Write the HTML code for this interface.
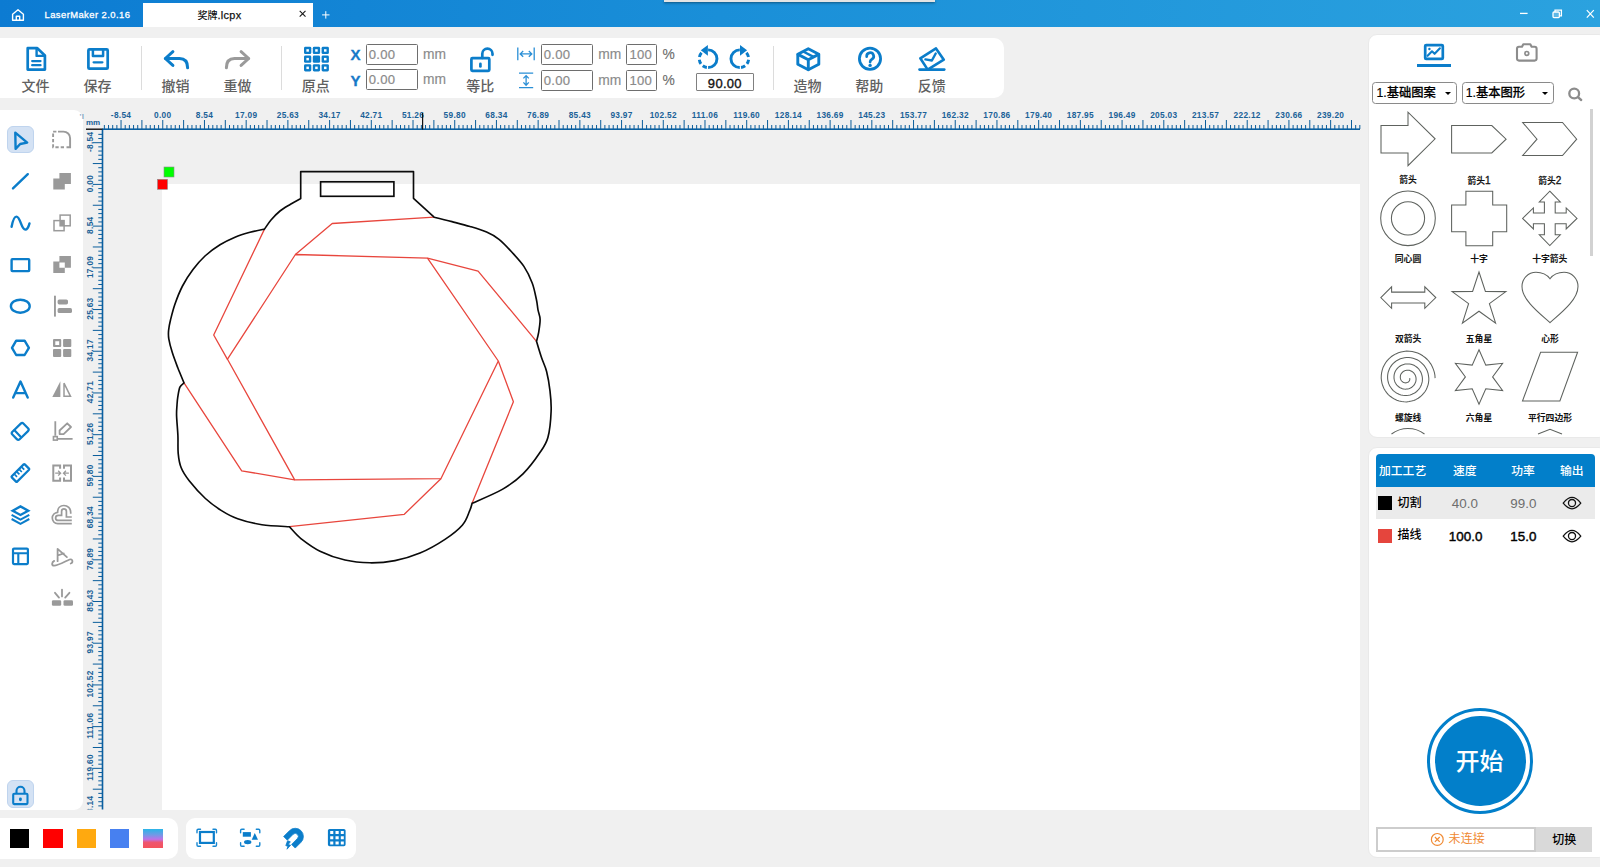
<!DOCTYPE html>
<html lang="zh-CN"><head><meta charset="utf-8"><title>LaserMaker 2.0.16</title>
<style>
*{box-sizing:border-box;margin:0;padding:0}
html,body{width:1600px;height:867px;overflow:hidden}
body{position:relative;background:#f0f0f0;font-family:"Liberation Sans","Noto Sans CJK SC",sans-serif;color:#000}
.abs{position:absolute}
.rl{font-family:"Liberation Sans",sans-serif;font-size:8.300px;font-weight:bold;fill:#1b6298;letter-spacing:.3px}
svg{display:block;overflow:visible}
.cj{font-family:"Liberation Sans","Noto Sans CJK SC",sans-serif}
</style></head><body>
<div class="abs" id="titlebar" style="left:0;top:0;width:1600px;height:27px;background:linear-gradient(90deg,#0c7bd2 0%,#1a8fd8 45%,#2ba2df 100%)"></div>
<div class="abs" style="left:664px;top:0;width:271px;height:1.5px;background:#e4e4e4;box-shadow:0 1px 2.5px rgba(0,0,0,.45)"></div>
<svg class="abs" style="left:11px;top:8px" width="14" height="14" viewBox="0 0 14 14"><path d="M1.6,6.2 L7,1.7 L12.4,6.2 V12.2 H1.6Z M5.3,12 V8.2 H8.7 V12" fill="none" stroke="#fff" stroke-width="1.4" stroke-linejoin="round"/></svg>
<div class="abs" style="left:44.500px;top:9.100px;font-size:9.400px;line-height:12px;color:#fff;letter-spacing:.45px;-webkit-text-stroke:.3px #fff;white-space:nowrap">LaserMaker 2.0.16</div>
<div class="abs" style="left:143.3px;top:3px;width:170.2px;height:24px;background:#fff"></div>
<div class="abs cj" style="left:143.500px;top:8.700px;width:152px;text-align:center;font-size:10px;line-height:13px;color:#111;font-weight:500;white-space:nowrap">奖牌<span style="font-size:10.900px;font-weight:400;letter-spacing:.3px;-webkit-text-stroke:.25px #111">.lcpx</span></div>
<svg class="abs" style="left:298px;top:9px" width="10" height="10" viewBox="298 9 10 10"><path d="M299.700,10.800 L305.500,16.600 M305.500,10.800 L299.700,16.600" stroke="#1a1a1a" stroke-width="1.100"/></svg>
<svg class="abs" style="left:321px;top:10px" width="10" height="10" viewBox="0 0 10 10"><path d="M4.8,1.2 V8.6 M1.1,4.9 H8.5" stroke="#fff" stroke-width="1"/></svg>
<svg class="abs" style="left:1518px;top:7px" width="80" height="14" viewBox="0 0 80 14"><g fill="none" stroke="#fff" stroke-width="1.3"><path d="M2,6.4 H9.6"/><rect x="35" y="5" width="6.4" height="5.6" rx="1" fill="#fff" fill-opacity=".25"/><path d="M37,5 V3.2 H43.4 V8.8 H41.4"/><path d="M68.8,3.2 L75.8,10.6 M75.8,3.2 L68.8,10.6" stroke-width="1.2"/></g></svg>
<style>
.tb{position:absolute;left:0;top:38.2px;width:1004.2px;height:59.5px;background:#fff;border-radius:0 10px 10px 0}
.tl{position:absolute;top:78px;width:60px;text-align:center;font-size:14px;line-height:16px;color:#606060;font-weight:500;white-space:nowrap}
.sep{position:absolute;top:46px;width:1px;height:44px;background:#dcdcdc}
.inp{position:absolute;border:1px solid #6e6e6e;border-radius:1.5px;background:#fff;height:20.6px;font-size:13.100px;line-height:18.600px;color:#8a8a8a;padding-left:1.700px;padding-top:1.300px;letter-spacing:.3px;-webkit-text-stroke:.2px #8a8a8a;white-space:nowrap;overflow:hidden}
.un{position:absolute;font-size:13.8px;line-height:16px;color:#8a8a8a;-webkit-text-stroke:.15px #8a8a8a}
.bl{fill:none;stroke:#0b7dca;stroke-linecap:round;stroke-linejoin:round}
</style>
<div class="tb"></div>
<!-- file -->
<svg class="abs" style="left:24px;top:44px" width="26" height="30" viewBox="0 0 26 30"><g class="bl" stroke-width="2.7"><path d="M3.7,4.200 H13.3 L20.900,11.4 V25.6 H3.700Z"/><path d="M12.6,4.6 V11.9 H20.3" stroke-width="2.4"/><path d="M8.200,17.100 H16.5 M8.200,21.200 H16.5" stroke-width="2.300"/></g></svg>
<div class="tl" style="left:5.5px">文件</div>
<!-- save -->
<svg class="abs" style="left:85px;top:46px" width="26" height="26" viewBox="0 0 26 26"><g class="bl" stroke-width="2.7"><rect x="3.4" y="3.4" width="19.3" height="19.3" rx="1"/><path d="M7.900,3.600 V10.100 H18.100 V3.600" stroke-width="2.500"/><path d="M8.600,16.300 H17.400" stroke-width="2.300"/></g></svg>
<div class="tl" style="left:67.5px">保存</div>
<div class="sep" style="left:141px"></div>
<!-- undo -->
<svg class="abs" style="left:160px;top:46px" width="32" height="26" viewBox="0 0 32 26"><g class="bl" stroke-width="3"><path d="M12.900,5.700 L5.300,12.500 L12.900,19.400"/><path d="M5.600,12.500 H19.500 Q27.600,12.500 27.600,21.800"/></g></svg>
<div class="tl" style="left:145.6px">撤销</div>
<!-- redo -->
<svg class="abs" style="left:222px;top:46px" width="32" height="26" viewBox="0 0 32 26"><g class="bl" stroke-width="3" style="stroke:#9a9a9a"><path d="M19.100,5.700 L26.700,12.500 L19.100,19.400"/><path d="M26.400,12.500 H12.500 Q4.400,12.500 4.400,21.800"/></g></svg>
<div class="tl" style="left:207.6px">重做</div>
<div class="sep" style="left:281px"></div>
<!-- origin -->
<svg class="abs" style="left:303px;top:46px" width="27" height="26" viewBox="0 0 27 26"><g fill="#0b7dca">
<rect x="1" y=".8" width="7.3" height="7.3" rx="1.400"/><rect x="9.8" y=".8" width="7.3" height="7.3" rx="1.400"/><rect x="18.6" y=".8" width="7.3" height="7.3" rx="1.400"/>
<rect x="1" y="9.5" width="7.3" height="7.3" rx="1.400"/><rect x="9.8" y="9.5" width="7.3" height="7.3" rx="1.400"/><rect x="18.6" y="9.5" width="7.3" height="7.3" rx="1.400"/>
<rect x="1" y="18.2" width="7.3" height="7.3" rx="1.400"/><rect x="9.8" y="18.2" width="7.3" height="7.3" rx="1.400"/><rect x="18.6" y="18.2" width="7.3" height="7.3" rx="1.400"/></g>
<g fill="#fff"><rect x="3.4" y="3.2" width="2.5" height="2.5"/><rect x="12.2" y="3.2" width="2.5" height="2.5"/><rect x="21" y="3.2" width="2.5" height="2.5"/>
<rect x="3.4" y="11.9" width="2.5" height="2.5"/><rect x="21" y="11.9" width="2.5" height="2.5"/>
<rect x="3.4" y="20.6" width="2.5" height="2.5"/><rect x="12.2" y="20.6" width="2.5" height="2.5"/><rect x="21" y="20.6" width="2.5" height="2.5"/></g></svg>
<div class="tl" style="left:285.8px">原点</div>
<!-- X / Y -->
<div class="abs" style="left:350.600px;top:46.400px;font-size:15px;line-height:17px;font-weight:bold;color:#1779c8;-webkit-text-stroke:.35px #1779c8">X</div>
<div class="abs" style="left:350.600px;top:72.100px;font-size:15px;line-height:17px;font-weight:bold;color:#1779c8;-webkit-text-stroke:.35px #1779c8">Y</div>
<div class="inp" style="left:366px;top:44.2px;width:51.6px">0.00</div>
<div class="inp" style="left:366px;top:69.2px;width:51.6px">0.00</div>
<div class="un" style="left:423px;top:47.300px">mm</div>
<div class="un" style="left:423px;top:72.300px">mm</div>
<!-- lock -->
<svg class="abs" style="left:467px;top:44px" width="30" height="30" viewBox="0 0 30 30"><g class="bl" stroke-width="2.7"><rect x="4.400" y="14.200" width="17.900" height="12.600" rx="1"/><path d="M15.300,14 V9.700 A5.100,5.100 0 0 1 25.500,9.700 V10.800" /><path d="M13.400,19.900 V22.500" stroke-width="2.700"/></g></svg>
<div class="tl" style="left:450.2px">等比</div>
<!-- W/H -->
<svg class="abs" style="left:515px;top:45px" width="22" height="18" viewBox="0 0 22 18"><g fill="none" stroke="#2a8fd6" stroke-width="1.3"><path d="M2.8,2.6 V15.2 M19.2,2.6 V15.2 M5.2,8.9 H16.8 M8.2,6 L5.2,8.9 L8.2,11.8 M13.8,6 L16.8,8.9 L13.8,11.8"/></g></svg>
<svg class="abs" style="left:517px;top:71px" width="18" height="19" viewBox="0 0 18 19"><g fill="none" stroke="#2a8fd6" stroke-width="1.3"><path d="M2,2.2 H16.2 M2,16.6 H16.2 M9.1,4.6 V14.2 M6.4,7.4 L9.1,4.6 L11.8,7.4 M6.4,11.4 L9.1,14.2 L11.8,11.4"/></g></svg>
<div class="inp" style="left:541px;top:44.2px;width:51.8px">0.00</div>
<div class="inp" style="left:541px;top:70.2px;width:51.8px">0.00</div>
<div class="un" style="left:598.2px;top:47.300px">mm</div>
<div class="un" style="left:598.2px;top:73.300px">mm</div>
<div class="inp" style="left:626.2px;top:44.2px;width:30.8px;padding-left:2.200px">100</div>
<div class="inp" style="left:626.2px;top:70.2px;width:30.8px;padding-left:2.200px">100</div>
<div class="un" style="left:662.6px;top:47.300px;color:#666">%</div>
<div class="un" style="left:662.6px;top:73.300px;color:#666">%</div>
<!-- rotate -->
<svg class="abs" style="left:0;top:0" width="1600" height="100" viewBox="0 0 1600 100"><g fill="none" stroke="#0b7dca" stroke-width="2.9"><path d="M708.10,49.85 A8.85,8.85 0 0 1 708.10,67.55"/><path d="M706.87,67.46 A8.85,8.85 0 0 1 702.77,65.77"/><path d="M700.94,63.90 A8.85,8.85 0 0 1 699.32,59.78"/><path d="M699.41,57.01 A8.85,8.85 0 0 1 701.52,52.78"/><path d="M707.90,44.9 V55.8 L700.80,50.2Z" fill="#0b7dca" stroke="none"/><path d="M739.80,49.85 A8.85,8.85 0 0 0 739.80,67.55"/><path d="M741.03,67.46 A8.85,8.85 0 0 0 745.13,65.77"/><path d="M746.96,63.90 A8.85,8.85 0 0 0 748.58,59.78"/><path d="M748.49,57.01 A8.85,8.85 0 0 0 746.38,52.78"/><path d="M740.00,44.9 V55.8 L747.10,50.2Z" fill="#0b7dca" stroke="none"/></g></svg>
<div class="inp" style="left:696.2px;top:73.4px;width:57.4px;height:17.4px;line-height:15.4px;padding:1.5px 0 0 0;text-align:center;color:#111;border-color:#808080;border-radius:1px;font-size:13px;-webkit-text-stroke:.35px #111">90.00</div>
<div class="sep" style="left:773px"></div>
<!-- box -->
<svg class="abs" style="left:794px;top:45px" width="28" height="28" viewBox="0 0 28 28"><g class="bl" stroke-width="2.900" stroke-linejoin="miter"><path d="M14.300,3.700 L24.800,9.200 V19.200 L14.300,24.700 L3.800,19.200 V9.200Z"/><path d="M4,9.400 L14.300,14.800 L24.600,9.400 M14.300,14.800 V24.400"/><path d="M9.200,6.500 L19.500,11.900" stroke-width="2.500" stroke-linecap="butt"/></g></svg>
<div class="tl" style="left:777.5px">造物</div>
<!-- help -->
<svg class="abs" style="left:856px;top:45px" width="28" height="28" viewBox="0 0 28 28"><g class="bl" stroke-width="2.800"><circle cx="14" cy="13.800" r="10.600"/><path d="M10.700,11.600 A3.500,3.500 0 1 1 15.900,14.300 Q14.100,15.300 14.100,17.100" stroke-width="2.700"/></g><circle cx="14.100" cy="20.400" r="1.700" fill="#0b7dca"/></svg>
<div class="tl" style="left:839.2px">帮助</div>
<!-- feedback -->
<svg class="abs" style="left:916px;top:44px" width="32" height="30" viewBox="0 0 32 30"><g class="bl" stroke-width="2.600"><path d="M3.500,25.600 H28.300"/><path d="M4.300,14.300 L20,4.400 L27.800,15.700 L11.700,25.600Z"/><path d="M9.400,15.400 L15.900,16.500 L19.700,9.500" stroke-width="2.400"/></g></svg>
<div class="tl" style="left:901.8px">反馈</div>
<div class="abs" style="left:0;top:110px;width:83px;height:699.500px;background:#fff;border-radius:0 9px 9px 0"></div>
<div class="abs" style="left:6.900px;top:126px;width:27.200px;height:27.200px;background:#d4e2f4;border:1px solid #bfd4ee;border-radius:6px"></div>
<svg class="abs" style="left:0;top:110px" width="84" height="700" viewBox="0 110 84 700">
<g fill="none" stroke="#0b7dca" stroke-width="2.4" stroke-linecap="round" stroke-linejoin="round">
<path d="M15.3,132.6 L27.2,142.6 L20.2,144 L15.6,148.8Z"/>
<path d="M13,188.4 L27.8,174.2"/>
<path d="M11.6,226.8 C12.6,221.5 13.8,216.6 16.4,216.6 C20.5,216.600 21.2,229.6 25.3,229.6 C27.6,229.6 28.7,226.5 29.5,223.400"/>
<rect x="11.6" y="259.1" width="17.6" height="12" rx=".8"/>
<ellipse cx="20.3" cy="306.2" rx="9.4" ry="6.5"/>
<path d="M12,347.8 L16.2,340.7 H24.6 L28.900,347.8 L24.6,355 H16.2Z"/>
<path d="M13.200,397.600 L20.500,381.600 L27.700,397.600 M15.800,393.100 H25.2"/>
<g transform="translate(20.200,431.400) rotate(-44)" stroke-width="2.200"><rect x="-7.800" y="-5.200" width="15.600" height="10.400" rx="2"/><path d="M-3.300,-4.800 V4.800"/></g>
<g transform="translate(20.400,473) rotate(-45)"><rect x="-9.200" y="-3.800" width="18.400" height="7.600" rx=".8" stroke-width="2.200"/><path d="M-5.100,-3.300 V0.300 M-1.700,-3.300 V0.300 M1.700,-3.300 V0.300 M5.100,-3.300 V0.300" stroke-width="1.700" stroke-linecap="butt"/></g>
<path d="M12.700,510.700 L20.460,506.400 L28.200,510.700 L20.460,515Z" stroke-width="2.400" stroke-linejoin="miter"/>
<path d="M11.600,514.900 L20.460,519.700 L29.300,514.900 M11.600,519 L20.460,523.800 L29.300,519" stroke-width="2" stroke-linejoin="miter" stroke-linecap="butt"/>
<rect x="13" y="548.600" width="14.900" height="15.500" rx="1" stroke-width="2.200"/><path d="M13,553.300 H28 M18.300,553.500 V564" stroke-linecap="butt" stroke-width="2.100"/>
</g>
<g fill="none" stroke="#9a9a9a" stroke-width="1.400">
<path d="M58,131.600 H63.500 A6.600,6.600 0 0 1 70.100,138.200 V147.200 H66.500" stroke-width="1.900"/>
<path d="M56.400,131.600 H53.100 V147.200 H65.500" stroke-dasharray="3.300 2" stroke-width="1.900"/>
<rect x="54" y="220.600" width="10.100" height="10.100" stroke-width="1.500"/><rect x="60.100" y="215.100" width="10.100" height="10.700" stroke-width="1.500"/>
<path d="M64,383.200 V396.300 H70.500Z" stroke-linejoin="miter" stroke-width="1.500"/>
<path d="M55.300,421.300 V435.800 M58,438.800 H72.600" stroke-width="1.800"/><rect x="53.450" y="436.600" width="3.800" height="3.500" stroke-width="1.600"/>
<path d="M67.200,423.300 L71,427 L63.600,434.100 H59.600 V430.500Z" stroke-linejoin="round" stroke-width="1.800"/>
<path d="M60.100,468.800 V465.600 H53.300 V480.800 H60.100 V477.600 M64,468.800 V465.600 H71 V480.800 H64 V477.600" stroke-width="2"/>
<path d="M55.200,473.200 H60.400 M58.200,470.800 L60.600,473.200 L58.200,475.600 M68.900,473.200 H63.700 M65.900,470.800 L63.500,473.200 L65.900,475.600" stroke-width="1.300"/>
<path d="M71.800,523.700 H57.800 C54.500,523.700 52.300,521 52.300,518 C52.300,514.800 54.800,512.600 57.600,512.300 C57.600,508.400 60.200,505.500 63.900,505.500 C67.700,505.500 70.700,508.400 70.700,512.300 V513.800" stroke-width="1.700"/>
<path d="M71.800,520.400 H58.400 C56.700,520.400 55.600,519.300 55.600,517.900 C55.600,516.500 56.800,515.400 58.400,515.400 H61.600 V511.400 C61.600,509.900 62.600,508.800 63.900,508.800 C65.400,508.800 66.400,509.900 66.400,511.400 V517 H71.800" stroke-width="1.700"/>
<path d="M57.600,561.200 V548.800 L66.900,557.100 M57.800,555.300 L63.800,553.500" stroke-width="1.800" stroke-linecap="round" stroke-linejoin="round"/>
<path d="M54.200,560.900 C51.600,562.200 51.400,565.500 54,565.700 C57.500,565.900 66,561 69.600,559.500 C72.600,558.300 73.500,562.600 70.700,563.500" stroke-width="1.800" stroke-linecap="round"/>
<path d="M62,589.600 V596.400 M55,592.800 L59,597.600 M69.400,592.800 L65.200,597.600" stroke-width="1.800" stroke-linecap="round"/>
</g>
<g fill="#9a9a9a">
<path d="M59.400,172.900 H70.900 V184.100 H64.800 V189.600 H53.300 V178.400 H59.400Z"/>
<rect x="60.100" y="220.600" width="4" height="5.200"/>
<path d="M59.400,256.100 H70.900 V267.800 H64.800 V273.100 H53.300 V261.600 H59.400Z M59.400,262.400 V267.800 H64.800 V262.400Z" fill-rule="evenodd"/>
<rect x="54" y="295.700" width="1.900" height="20.900"/><rect x="57.600" y="299.500" width="10.400" height="4.900" rx="1.600"/><rect x="57.600" y="308.100" width="14.400" height="4.900" rx="1.600"/>
<path d="M54,339 H60.200 Q61.200,339 61.200,340 V346.100 Q61.200,347.100 60.200,347.100 H54 Q53,347.100 53,346.100 V340 Q53,339 54,339Z M55.300,341.300 V344.900 H59.200 V341.300Z" fill-rule="evenodd"/>
<rect x="63.100" y="339" width="8.200" height="8.100" rx="1"/><rect x="53" y="349" width="8.200" height="8.100" rx="1"/><rect x="63.100" y="349" width="8.200" height="8.100" rx="1"/>
<path d="M60.400,381.300 V397.100 H52.300Z"/>
<rect x="51.900" y="600.200" width="9.300" height="5.500" rx="1.300"/><rect x="63.500" y="600.200" width="9.500" height="5.500" rx="1.300"/>
</g>
</svg>
<div class="abs" style="left:6.800px;top:779.900px;width:27.200px;height:28px;background:#d4e2f4;border:1px solid #bfd4ee;border-radius:6px"></div>
<svg class="abs" style="left:7px;top:780.500px" width="27" height="28" viewBox="0 0 27 28"><g fill="none" stroke="#0b7dca" stroke-width="2.100"><rect x="6.200" y="12.800" width="14.300" height="10.300" rx="1"/><path d="M9.500,12.600 V9.700 A4,4 0 0 1 17.500,9.700 V12.600"/><path d="M13.400,17.800 V18.800" stroke-width="2.800" stroke-linecap="round"/></g></svg>
<div class="abs" style="left:162px;top:184px;width:1198px;height:625.5px;background:#fff"></div><svg class="abs" style="left:0;top:0" width="1600" height="867" viewBox="0 0 1600 867">
<defs><clipPath id="vclip"><rect x="84" y="130" width="20" height="679.5"/></clipPath></defs>
<g fill="#0b5e9c"><rect x="103.86" y="125" width="1" height="4"/><rect x="108.03" y="125" width="1" height="4"/><rect x="112.20" y="125" width="1" height="4"/><rect x="116.37" y="125" width="1" height="4"/><rect x="120.54" y="120" width="1" height="9"/><rect x="124.71" y="125" width="1" height="4"/><rect x="128.88" y="125" width="1" height="4"/><rect x="133.05" y="125" width="1" height="4"/><rect x="137.22" y="125" width="1" height="4"/><rect x="141.40" y="120" width="1" height="9"/><rect x="145.57" y="125" width="1" height="4"/><rect x="149.74" y="125" width="1" height="4"/><rect x="153.91" y="125" width="1" height="4"/><rect x="158.08" y="125" width="1" height="4"/><rect x="162.25" y="120" width="1" height="9"/><rect x="166.42" y="125" width="1" height="4"/><rect x="170.59" y="125" width="1" height="4"/><rect x="174.76" y="125" width="1" height="4"/><rect x="178.93" y="125" width="1" height="4"/><rect x="183.10" y="120" width="1" height="9"/><rect x="187.28" y="125" width="1" height="4"/><rect x="191.45" y="125" width="1" height="4"/><rect x="195.62" y="125" width="1" height="4"/><rect x="199.79" y="125" width="1" height="4"/><rect x="203.96" y="120" width="1" height="9"/><rect x="208.13" y="125" width="1" height="4"/><rect x="212.30" y="125" width="1" height="4"/><rect x="216.47" y="125" width="1" height="4"/><rect x="220.64" y="125" width="1" height="4"/><rect x="224.81" y="120" width="1" height="9"/><rect x="228.99" y="125" width="1" height="4"/><rect x="233.16" y="125" width="1" height="4"/><rect x="237.33" y="125" width="1" height="4"/><rect x="241.50" y="125" width="1" height="4"/><rect x="245.67" y="120" width="1" height="9"/><rect x="249.84" y="125" width="1" height="4"/><rect x="254.01" y="125" width="1" height="4"/><rect x="258.18" y="125" width="1" height="4"/><rect x="262.35" y="125" width="1" height="4"/><rect x="266.52" y="120" width="1" height="9"/><rect x="270.70" y="125" width="1" height="4"/><rect x="274.87" y="125" width="1" height="4"/><rect x="279.04" y="125" width="1" height="4"/><rect x="283.21" y="125" width="1" height="4"/><rect x="287.38" y="120" width="1" height="9"/><rect x="291.55" y="125" width="1" height="4"/><rect x="295.72" y="125" width="1" height="4"/><rect x="299.89" y="125" width="1" height="4"/><rect x="304.06" y="125" width="1" height="4"/><rect x="308.24" y="120" width="1" height="9"/><rect x="312.41" y="125" width="1" height="4"/><rect x="316.58" y="125" width="1" height="4"/><rect x="320.75" y="125" width="1" height="4"/><rect x="324.92" y="125" width="1" height="4"/><rect x="329.09" y="120" width="1" height="9"/><rect x="333.26" y="125" width="1" height="4"/><rect x="337.43" y="125" width="1" height="4"/><rect x="341.60" y="125" width="1" height="4"/><rect x="345.77" y="125" width="1" height="4"/><rect x="349.95" y="120" width="1" height="9"/><rect x="354.12" y="125" width="1" height="4"/><rect x="358.29" y="125" width="1" height="4"/><rect x="362.46" y="125" width="1" height="4"/><rect x="366.63" y="125" width="1" height="4"/><rect x="370.80" y="120" width="1" height="9"/><rect x="374.97" y="125" width="1" height="4"/><rect x="379.14" y="125" width="1" height="4"/><rect x="383.31" y="125" width="1" height="4"/><rect x="387.48" y="125" width="1" height="4"/><rect x="391.65" y="120" width="1" height="9"/><rect x="395.83" y="125" width="1" height="4"/><rect x="400.00" y="125" width="1" height="4"/><rect x="404.17" y="125" width="1" height="4"/><rect x="408.34" y="125" width="1" height="4"/><rect x="412.51" y="120" width="1" height="9"/><rect x="416.68" y="125" width="1" height="4"/><rect x="420.85" y="125" width="1" height="4"/><rect x="425.02" y="125" width="1" height="4"/><rect x="429.19" y="125" width="1" height="4"/><rect x="433.37" y="120" width="1" height="9"/><rect x="437.54" y="125" width="1" height="4"/><rect x="441.71" y="125" width="1" height="4"/><rect x="445.88" y="125" width="1" height="4"/><rect x="450.05" y="125" width="1" height="4"/><rect x="454.22" y="120" width="1" height="9"/><rect x="458.39" y="125" width="1" height="4"/><rect x="462.56" y="125" width="1" height="4"/><rect x="466.73" y="125" width="1" height="4"/><rect x="470.90" y="125" width="1" height="4"/><rect x="475.08" y="120" width="1" height="9"/><rect x="479.25" y="125" width="1" height="4"/><rect x="483.42" y="125" width="1" height="4"/><rect x="487.59" y="125" width="1" height="4"/><rect x="491.76" y="125" width="1" height="4"/><rect x="495.93" y="120" width="1" height="9"/><rect x="500.10" y="125" width="1" height="4"/><rect x="504.27" y="125" width="1" height="4"/><rect x="508.44" y="125" width="1" height="4"/><rect x="512.61" y="125" width="1" height="4"/><rect x="516.79" y="120" width="1" height="9"/><rect x="520.96" y="125" width="1" height="4"/><rect x="525.13" y="125" width="1" height="4"/><rect x="529.30" y="125" width="1" height="4"/><rect x="533.47" y="125" width="1" height="4"/><rect x="537.64" y="120" width="1" height="9"/><rect x="541.81" y="125" width="1" height="4"/><rect x="545.98" y="125" width="1" height="4"/><rect x="550.15" y="125" width="1" height="4"/><rect x="554.32" y="125" width="1" height="4"/><rect x="558.50" y="120" width="1" height="9"/><rect x="562.67" y="125" width="1" height="4"/><rect x="566.84" y="125" width="1" height="4"/><rect x="571.01" y="125" width="1" height="4"/><rect x="575.18" y="125" width="1" height="4"/><rect x="579.35" y="120" width="1" height="9"/><rect x="583.52" y="125" width="1" height="4"/><rect x="587.69" y="125" width="1" height="4"/><rect x="591.86" y="125" width="1" height="4"/><rect x="596.03" y="125" width="1" height="4"/><rect x="600.21" y="120" width="1" height="9"/><rect x="604.38" y="125" width="1" height="4"/><rect x="608.55" y="125" width="1" height="4"/><rect x="612.72" y="125" width="1" height="4"/><rect x="616.89" y="125" width="1" height="4"/><rect x="621.06" y="120" width="1" height="9"/><rect x="625.23" y="125" width="1" height="4"/><rect x="629.40" y="125" width="1" height="4"/><rect x="633.57" y="125" width="1" height="4"/><rect x="637.74" y="125" width="1" height="4"/><rect x="641.91" y="120" width="1" height="9"/><rect x="646.09" y="125" width="1" height="4"/><rect x="650.26" y="125" width="1" height="4"/><rect x="654.43" y="125" width="1" height="4"/><rect x="658.60" y="125" width="1" height="4"/><rect x="662.77" y="120" width="1" height="9"/><rect x="666.94" y="125" width="1" height="4"/><rect x="671.11" y="125" width="1" height="4"/><rect x="675.28" y="125" width="1" height="4"/><rect x="679.45" y="125" width="1" height="4"/><rect x="683.62" y="120" width="1" height="9"/><rect x="687.80" y="125" width="1" height="4"/><rect x="691.97" y="125" width="1" height="4"/><rect x="696.14" y="125" width="1" height="4"/><rect x="700.31" y="125" width="1" height="4"/><rect x="704.48" y="120" width="1" height="9"/><rect x="708.65" y="125" width="1" height="4"/><rect x="712.82" y="125" width="1" height="4"/><rect x="716.99" y="125" width="1" height="4"/><rect x="721.16" y="125" width="1" height="4"/><rect x="725.34" y="120" width="1" height="9"/><rect x="729.51" y="125" width="1" height="4"/><rect x="733.68" y="125" width="1" height="4"/><rect x="737.85" y="125" width="1" height="4"/><rect x="742.02" y="125" width="1" height="4"/><rect x="746.19" y="120" width="1" height="9"/><rect x="750.36" y="125" width="1" height="4"/><rect x="754.53" y="125" width="1" height="4"/><rect x="758.70" y="125" width="1" height="4"/><rect x="762.87" y="125" width="1" height="4"/><rect x="767.05" y="120" width="1" height="9"/><rect x="771.22" y="125" width="1" height="4"/><rect x="775.39" y="125" width="1" height="4"/><rect x="779.56" y="125" width="1" height="4"/><rect x="783.73" y="125" width="1" height="4"/><rect x="787.90" y="120" width="1" height="9"/><rect x="792.07" y="125" width="1" height="4"/><rect x="796.24" y="125" width="1" height="4"/><rect x="800.41" y="125" width="1" height="4"/><rect x="804.58" y="125" width="1" height="4"/><rect x="808.75" y="120" width="1" height="9"/><rect x="812.93" y="125" width="1" height="4"/><rect x="817.10" y="125" width="1" height="4"/><rect x="821.27" y="125" width="1" height="4"/><rect x="825.44" y="125" width="1" height="4"/><rect x="829.61" y="120" width="1" height="9"/><rect x="833.78" y="125" width="1" height="4"/><rect x="837.95" y="125" width="1" height="4"/><rect x="842.12" y="125" width="1" height="4"/><rect x="846.29" y="125" width="1" height="4"/><rect x="850.47" y="120" width="1" height="9"/><rect x="854.64" y="125" width="1" height="4"/><rect x="858.81" y="125" width="1" height="4"/><rect x="862.98" y="125" width="1" height="4"/><rect x="867.15" y="125" width="1" height="4"/><rect x="871.32" y="120" width="1" height="9"/><rect x="875.49" y="125" width="1" height="4"/><rect x="879.66" y="125" width="1" height="4"/><rect x="883.83" y="125" width="1" height="4"/><rect x="888.00" y="125" width="1" height="4"/><rect x="892.18" y="120" width="1" height="9"/><rect x="896.35" y="125" width="1" height="4"/><rect x="900.52" y="125" width="1" height="4"/><rect x="904.69" y="125" width="1" height="4"/><rect x="908.86" y="125" width="1" height="4"/><rect x="913.03" y="120" width="1" height="9"/><rect x="917.20" y="125" width="1" height="4"/><rect x="921.37" y="125" width="1" height="4"/><rect x="925.54" y="125" width="1" height="4"/><rect x="929.71" y="125" width="1" height="4"/><rect x="933.89" y="120" width="1" height="9"/><rect x="938.06" y="125" width="1" height="4"/><rect x="942.23" y="125" width="1" height="4"/><rect x="946.40" y="125" width="1" height="4"/><rect x="950.57" y="125" width="1" height="4"/><rect x="954.74" y="120" width="1" height="9"/><rect x="958.91" y="125" width="1" height="4"/><rect x="963.08" y="125" width="1" height="4"/><rect x="967.25" y="125" width="1" height="4"/><rect x="971.42" y="125" width="1" height="4"/><rect x="975.60" y="120" width="1" height="9"/><rect x="979.77" y="125" width="1" height="4"/><rect x="983.94" y="125" width="1" height="4"/><rect x="988.11" y="125" width="1" height="4"/><rect x="992.28" y="125" width="1" height="4"/><rect x="996.45" y="120" width="1" height="9"/><rect x="1000.62" y="125" width="1" height="4"/><rect x="1004.79" y="125" width="1" height="4"/><rect x="1008.96" y="125" width="1" height="4"/><rect x="1013.13" y="125" width="1" height="4"/><rect x="1017.31" y="120" width="1" height="9"/><rect x="1021.48" y="125" width="1" height="4"/><rect x="1025.65" y="125" width="1" height="4"/><rect x="1029.82" y="125" width="1" height="4"/><rect x="1033.99" y="125" width="1" height="4"/><rect x="1038.16" y="120" width="1" height="9"/><rect x="1042.33" y="125" width="1" height="4"/><rect x="1046.50" y="125" width="1" height="4"/><rect x="1050.67" y="125" width="1" height="4"/><rect x="1054.84" y="125" width="1" height="4"/><rect x="1059.02" y="120" width="1" height="9"/><rect x="1063.19" y="125" width="1" height="4"/><rect x="1067.36" y="125" width="1" height="4"/><rect x="1071.53" y="125" width="1" height="4"/><rect x="1075.70" y="125" width="1" height="4"/><rect x="1079.87" y="120" width="1" height="9"/><rect x="1084.04" y="125" width="1" height="4"/><rect x="1088.21" y="125" width="1" height="4"/><rect x="1092.38" y="125" width="1" height="4"/><rect x="1096.55" y="125" width="1" height="4"/><rect x="1100.72" y="120" width="1" height="9"/><rect x="1104.90" y="125" width="1" height="4"/><rect x="1109.07" y="125" width="1" height="4"/><rect x="1113.24" y="125" width="1" height="4"/><rect x="1117.41" y="125" width="1" height="4"/><rect x="1121.58" y="120" width="1" height="9"/><rect x="1125.75" y="125" width="1" height="4"/><rect x="1129.92" y="125" width="1" height="4"/><rect x="1134.09" y="125" width="1" height="4"/><rect x="1138.26" y="125" width="1" height="4"/><rect x="1142.43" y="120" width="1" height="9"/><rect x="1146.61" y="125" width="1" height="4"/><rect x="1150.78" y="125" width="1" height="4"/><rect x="1154.95" y="125" width="1" height="4"/><rect x="1159.12" y="125" width="1" height="4"/><rect x="1163.29" y="120" width="1" height="9"/><rect x="1167.46" y="125" width="1" height="4"/><rect x="1171.63" y="125" width="1" height="4"/><rect x="1175.80" y="125" width="1" height="4"/><rect x="1179.97" y="125" width="1" height="4"/><rect x="1184.14" y="120" width="1" height="9"/><rect x="1188.32" y="125" width="1" height="4"/><rect x="1192.49" y="125" width="1" height="4"/><rect x="1196.66" y="125" width="1" height="4"/><rect x="1200.83" y="125" width="1" height="4"/><rect x="1205.00" y="120" width="1" height="9"/><rect x="1209.17" y="125" width="1" height="4"/><rect x="1213.34" y="125" width="1" height="4"/><rect x="1217.51" y="125" width="1" height="4"/><rect x="1221.68" y="125" width="1" height="4"/><rect x="1225.86" y="120" width="1" height="9"/><rect x="1230.03" y="125" width="1" height="4"/><rect x="1234.20" y="125" width="1" height="4"/><rect x="1238.37" y="125" width="1" height="4"/><rect x="1242.54" y="125" width="1" height="4"/><rect x="1246.71" y="120" width="1" height="9"/><rect x="1250.88" y="125" width="1" height="4"/><rect x="1255.05" y="125" width="1" height="4"/><rect x="1259.22" y="125" width="1" height="4"/><rect x="1263.39" y="125" width="1" height="4"/><rect x="1267.57" y="120" width="1" height="9"/><rect x="1271.74" y="125" width="1" height="4"/><rect x="1275.91" y="125" width="1" height="4"/><rect x="1280.08" y="125" width="1" height="4"/><rect x="1284.25" y="125" width="1" height="4"/><rect x="1288.42" y="120" width="1" height="9"/><rect x="1292.59" y="125" width="1" height="4"/><rect x="1296.76" y="125" width="1" height="4"/><rect x="1300.93" y="125" width="1" height="4"/><rect x="1305.10" y="125" width="1" height="4"/><rect x="1309.28" y="120" width="1" height="9"/><rect x="1313.45" y="125" width="1" height="4"/><rect x="1317.62" y="125" width="1" height="4"/><rect x="1321.79" y="125" width="1" height="4"/><rect x="1325.96" y="125" width="1" height="4"/><rect x="1330.13" y="120" width="1" height="9"/><rect x="1334.30" y="125" width="1" height="4"/><rect x="1338.47" y="125" width="1" height="4"/><rect x="1342.64" y="125" width="1" height="4"/><rect x="1346.81" y="125" width="1" height="4"/><rect x="1350.99" y="120" width="1" height="9"/><rect x="1355.16" y="125" width="1" height="4"/><rect x="1359.33" y="125" width="1" height="4"/></g>
<rect x="102" y="128.4" width="1258" height="1.6" fill="#0a5fa0"/>
<g clip-path="url(#vclip)"><g fill="#0b5e9c"><rect x="98.3" y="133.85" width="3.7" height="1"/><rect x="98.3" y="138.02" width="3.7" height="1"/><rect x="92.8" y="142.19" width="9.2" height="1"/><rect x="98.3" y="146.36" width="3.7" height="1"/><rect x="98.3" y="150.53" width="3.7" height="1"/><rect x="98.3" y="154.70" width="3.7" height="1"/><rect x="98.3" y="158.87" width="3.7" height="1"/><rect x="92.8" y="163.05" width="9.2" height="1"/><rect x="98.3" y="167.22" width="3.7" height="1"/><rect x="98.3" y="171.39" width="3.7" height="1"/><rect x="98.3" y="175.56" width="3.7" height="1"/><rect x="98.3" y="179.73" width="3.7" height="1"/><rect x="92.8" y="183.90" width="9.2" height="1"/><rect x="98.3" y="188.07" width="3.7" height="1"/><rect x="98.3" y="192.24" width="3.7" height="1"/><rect x="98.3" y="196.41" width="3.7" height="1"/><rect x="98.3" y="200.58" width="3.7" height="1"/><rect x="92.8" y="204.75" width="9.2" height="1"/><rect x="98.3" y="208.93" width="3.7" height="1"/><rect x="98.3" y="213.10" width="3.7" height="1"/><rect x="98.3" y="217.27" width="3.7" height="1"/><rect x="98.3" y="221.44" width="3.7" height="1"/><rect x="92.8" y="225.61" width="9.2" height="1"/><rect x="98.3" y="229.78" width="3.7" height="1"/><rect x="98.3" y="233.95" width="3.7" height="1"/><rect x="98.3" y="238.12" width="3.7" height="1"/><rect x="98.3" y="242.29" width="3.7" height="1"/><rect x="92.8" y="246.47" width="9.2" height="1"/><rect x="98.3" y="250.64" width="3.7" height="1"/><rect x="98.3" y="254.81" width="3.7" height="1"/><rect x="98.3" y="258.98" width="3.7" height="1"/><rect x="98.3" y="263.15" width="3.7" height="1"/><rect x="92.8" y="267.32" width="9.2" height="1"/><rect x="98.3" y="271.49" width="3.7" height="1"/><rect x="98.3" y="275.66" width="3.7" height="1"/><rect x="98.3" y="279.83" width="3.7" height="1"/><rect x="98.3" y="284.00" width="3.7" height="1"/><rect x="92.8" y="288.18" width="9.2" height="1"/><rect x="98.3" y="292.35" width="3.7" height="1"/><rect x="98.3" y="296.52" width="3.7" height="1"/><rect x="98.3" y="300.69" width="3.7" height="1"/><rect x="98.3" y="304.86" width="3.7" height="1"/><rect x="92.8" y="309.03" width="9.2" height="1"/><rect x="98.3" y="313.20" width="3.7" height="1"/><rect x="98.3" y="317.37" width="3.7" height="1"/><rect x="98.3" y="321.54" width="3.7" height="1"/><rect x="98.3" y="325.71" width="3.7" height="1"/><rect x="92.8" y="329.88" width="9.2" height="1"/><rect x="98.3" y="334.06" width="3.7" height="1"/><rect x="98.3" y="338.23" width="3.7" height="1"/><rect x="98.3" y="342.40" width="3.7" height="1"/><rect x="98.3" y="346.57" width="3.7" height="1"/><rect x="92.8" y="350.74" width="9.2" height="1"/><rect x="98.3" y="354.91" width="3.7" height="1"/><rect x="98.3" y="359.08" width="3.7" height="1"/><rect x="98.3" y="363.25" width="3.7" height="1"/><rect x="98.3" y="367.42" width="3.7" height="1"/><rect x="92.8" y="371.60" width="9.2" height="1"/><rect x="98.3" y="375.77" width="3.7" height="1"/><rect x="98.3" y="379.94" width="3.7" height="1"/><rect x="98.3" y="384.11" width="3.7" height="1"/><rect x="98.3" y="388.28" width="3.7" height="1"/><rect x="92.8" y="392.45" width="9.2" height="1"/><rect x="98.3" y="396.62" width="3.7" height="1"/><rect x="98.3" y="400.79" width="3.7" height="1"/><rect x="98.3" y="404.96" width="3.7" height="1"/><rect x="98.3" y="409.13" width="3.7" height="1"/><rect x="92.8" y="413.31" width="9.2" height="1"/><rect x="98.3" y="417.48" width="3.7" height="1"/><rect x="98.3" y="421.65" width="3.7" height="1"/><rect x="98.3" y="425.82" width="3.7" height="1"/><rect x="98.3" y="429.99" width="3.7" height="1"/><rect x="92.8" y="434.16" width="9.2" height="1"/><rect x="98.3" y="438.33" width="3.7" height="1"/><rect x="98.3" y="442.50" width="3.7" height="1"/><rect x="98.3" y="446.67" width="3.7" height="1"/><rect x="98.3" y="450.84" width="3.7" height="1"/><rect x="92.8" y="455.01" width="9.2" height="1"/><rect x="98.3" y="459.19" width="3.7" height="1"/><rect x="98.3" y="463.36" width="3.7" height="1"/><rect x="98.3" y="467.53" width="3.7" height="1"/><rect x="98.3" y="471.70" width="3.7" height="1"/><rect x="92.8" y="475.87" width="9.2" height="1"/><rect x="98.3" y="480.04" width="3.7" height="1"/><rect x="98.3" y="484.21" width="3.7" height="1"/><rect x="98.3" y="488.38" width="3.7" height="1"/><rect x="98.3" y="492.55" width="3.7" height="1"/><rect x="92.8" y="496.73" width="9.2" height="1"/><rect x="98.3" y="500.90" width="3.7" height="1"/><rect x="98.3" y="505.07" width="3.7" height="1"/><rect x="98.3" y="509.24" width="3.7" height="1"/><rect x="98.3" y="513.41" width="3.7" height="1"/><rect x="92.8" y="517.58" width="9.2" height="1"/><rect x="98.3" y="521.75" width="3.7" height="1"/><rect x="98.3" y="525.92" width="3.7" height="1"/><rect x="98.3" y="530.09" width="3.7" height="1"/><rect x="98.3" y="534.26" width="3.7" height="1"/><rect x="92.8" y="538.44" width="9.2" height="1"/><rect x="98.3" y="542.61" width="3.7" height="1"/><rect x="98.3" y="546.78" width="3.7" height="1"/><rect x="98.3" y="550.95" width="3.7" height="1"/><rect x="98.3" y="555.12" width="3.7" height="1"/><rect x="92.8" y="559.29" width="9.2" height="1"/><rect x="98.3" y="563.46" width="3.7" height="1"/><rect x="98.3" y="567.63" width="3.7" height="1"/><rect x="98.3" y="571.80" width="3.7" height="1"/><rect x="98.3" y="575.97" width="3.7" height="1"/><rect x="92.8" y="580.14" width="9.2" height="1"/><rect x="98.3" y="584.32" width="3.7" height="1"/><rect x="98.3" y="588.49" width="3.7" height="1"/><rect x="98.3" y="592.66" width="3.7" height="1"/><rect x="98.3" y="596.83" width="3.7" height="1"/><rect x="92.8" y="601.00" width="9.2" height="1"/><rect x="98.3" y="605.17" width="3.7" height="1"/><rect x="98.3" y="609.34" width="3.7" height="1"/><rect x="98.3" y="613.51" width="3.7" height="1"/><rect x="98.3" y="617.68" width="3.7" height="1"/><rect x="92.8" y="621.86" width="9.2" height="1"/><rect x="98.3" y="626.03" width="3.7" height="1"/><rect x="98.3" y="630.20" width="3.7" height="1"/><rect x="98.3" y="634.37" width="3.7" height="1"/><rect x="98.3" y="638.54" width="3.7" height="1"/><rect x="92.8" y="642.71" width="9.2" height="1"/><rect x="98.3" y="646.88" width="3.7" height="1"/><rect x="98.3" y="651.05" width="3.7" height="1"/><rect x="98.3" y="655.22" width="3.7" height="1"/><rect x="98.3" y="659.39" width="3.7" height="1"/><rect x="92.8" y="663.57" width="9.2" height="1"/><rect x="98.3" y="667.74" width="3.7" height="1"/><rect x="98.3" y="671.91" width="3.7" height="1"/><rect x="98.3" y="676.08" width="3.7" height="1"/><rect x="98.3" y="680.25" width="3.7" height="1"/><rect x="92.8" y="684.42" width="9.2" height="1"/><rect x="98.3" y="688.59" width="3.7" height="1"/><rect x="98.3" y="692.76" width="3.7" height="1"/><rect x="98.3" y="696.93" width="3.7" height="1"/><rect x="98.3" y="701.10" width="3.7" height="1"/><rect x="92.8" y="705.27" width="9.2" height="1"/><rect x="98.3" y="709.45" width="3.7" height="1"/><rect x="98.3" y="713.62" width="3.7" height="1"/><rect x="98.3" y="717.79" width="3.7" height="1"/><rect x="98.3" y="721.96" width="3.7" height="1"/><rect x="92.8" y="726.13" width="9.2" height="1"/><rect x="98.3" y="730.30" width="3.7" height="1"/><rect x="98.3" y="734.47" width="3.7" height="1"/><rect x="98.3" y="738.64" width="3.7" height="1"/><rect x="98.3" y="742.81" width="3.7" height="1"/><rect x="92.8" y="746.99" width="9.2" height="1"/><rect x="98.3" y="751.16" width="3.7" height="1"/><rect x="98.3" y="755.33" width="3.7" height="1"/><rect x="98.3" y="759.50" width="3.7" height="1"/><rect x="98.3" y="763.67" width="3.7" height="1"/><rect x="92.8" y="767.84" width="9.2" height="1"/><rect x="98.3" y="772.01" width="3.7" height="1"/><rect x="98.3" y="776.18" width="3.7" height="1"/><rect x="98.3" y="780.35" width="3.7" height="1"/><rect x="98.3" y="784.52" width="3.7" height="1"/><rect x="92.8" y="788.70" width="9.2" height="1"/><rect x="98.3" y="792.87" width="3.7" height="1"/><rect x="98.3" y="797.04" width="3.7" height="1"/><rect x="98.3" y="801.21" width="3.7" height="1"/><rect x="98.3" y="805.38" width="3.7" height="1"/></g>
<g class="rl" text-anchor="middle"><text transform="translate(92.9,141.79) rotate(-90)" x="0" y="0">-8.54</text><text transform="translate(92.9,183.50) rotate(-90)" x="0" y="0">0.00</text><text transform="translate(92.9,225.21) rotate(-90)" x="0" y="0">8.54</text><text transform="translate(92.9,266.92) rotate(-90)" x="0" y="0">17.09</text><text transform="translate(92.9,308.63) rotate(-90)" x="0" y="0">25.63</text><text transform="translate(92.9,350.34) rotate(-90)" x="0" y="0">34.17</text><text transform="translate(92.9,392.05) rotate(-90)" x="0" y="0">42.71</text><text transform="translate(92.9,433.76) rotate(-90)" x="0" y="0">51.26</text><text transform="translate(92.9,475.47) rotate(-90)" x="0" y="0">59.80</text><text transform="translate(92.9,517.18) rotate(-90)" x="0" y="0">68.34</text><text transform="translate(92.9,558.89) rotate(-90)" x="0" y="0">76.89</text><text transform="translate(92.9,600.60) rotate(-90)" x="0" y="0">85.43</text><text transform="translate(92.9,642.31) rotate(-90)" x="0" y="0">93.97</text><text transform="translate(92.9,684.02) rotate(-90)" x="0" y="0">102.52</text><text transform="translate(92.9,725.73) rotate(-90)" x="0" y="0">111.06</text><text transform="translate(92.9,767.44) rotate(-90)" x="0" y="0">119.60</text><text transform="translate(92.9,809.15) rotate(-90)" x="0" y="0">128.14</text></g></g>
<rect x="101.7" y="129" width="1.6" height="680.5" fill="#0a5fa0"/>
<g class="rl" text-anchor="middle"><text x="121.04" y="118.3">-8.54</text><text x="162.75" y="118.3">0.00</text><text x="204.46" y="118.3">8.54</text><text x="246.17" y="118.3">17.09</text><text x="287.88" y="118.3">25.63</text><text x="329.59" y="118.3">34.17</text><text x="371.30" y="118.3">42.71</text><text x="413.01" y="118.3">51.26</text><text x="454.72" y="118.3">59.80</text><text x="496.43" y="118.3">68.34</text><text x="538.14" y="118.3">76.89</text><text x="579.85" y="118.3">85.43</text><text x="621.56" y="118.3">93.97</text><text x="663.27" y="118.3">102.52</text><text x="704.98" y="118.3">111.06</text><text x="746.69" y="118.3">119.60</text><text x="788.40" y="118.3">128.14</text><text x="830.11" y="118.3">136.69</text><text x="871.82" y="118.3">145.23</text><text x="913.53" y="118.3">153.77</text><text x="955.24" y="118.3">162.32</text><text x="996.95" y="118.3">170.86</text><text x="1038.66" y="118.3">179.40</text><text x="1080.37" y="118.3">187.95</text><text x="1122.08" y="118.3">196.49</text><text x="1163.79" y="118.3">205.03</text><text x="1205.50" y="118.3">213.57</text><text x="1247.21" y="118.3">222.12</text><text x="1288.92" y="118.3">230.66</text><text x="1330.63" y="118.3">239.20</text></g>
<text class="rl" x="86" y="124.8" style="font-size:8px;letter-spacing:0">mm</text>
<rect x="86" y="128.5" width="16.5" height="1.4" fill="#111"/>
<rect x="422" y="113" width="1.2" height="16.5" fill="#111"/>
<text class="rl" x="79.5" y="118.6" style="font-size:8px;opacity:.55">'l</text>
</svg><svg class="abs" style="left:0;top:0" width="1600" height="867" viewBox="0 0 1600 867">
<g fill="none" stroke="#e8463d" stroke-width="1.300" stroke-linejoin="round"><path d="M295.4,254.5L427.5,258.1L498.3,361L440.9,478.7L294.7,479.9L227.5,359.2Z"/><path d="M295.4,254.5L332.2,223.5L434.1,217.2"/><path d="M427.5,258.1L478.1,271.2L536.5,341.3"/><path d="M498.3,361L513.4,401.8L472.1,503.3"/><path d="M440.9,478.7L404.3,514.3L289.4,526.7"/><path d="M294.7,479.9L241.7,470.8L184,382.9"/><path d="M227.6,359.6L213.7,335L264.5,229.1"/></g>
<path d="M300.7,171.6H413.5V198.3L434.1,217.2C437.1,217.9 446.0,220.0 452.0,221.6C458.0,223.2 464.2,224.8 470.0,226.5C475.8,228.2 481.8,229.9 486.6,232.1C491.4,234.2 494.9,236.1 499.0,239.4C503.1,242.7 507.4,247.3 511.5,251.8C515.6,256.3 520.4,261.2 523.9,266.4C527.4,271.6 530.1,277.5 532.2,283.0C534.3,288.5 535.4,295.0 536.4,299.5C537.4,304.0 537.4,306.6 538.0,309.9C538.6,313.2 540.0,315.4 540.1,319.2C540.2,323.0 539.2,329.0 538.6,332.7C538.0,336.4 536.9,339.9 536.5,341.3C537.3,344.0 539.8,352.6 541.5,357.6C543.2,362.6 545.2,366.0 546.6,371.5C548.0,377.0 549.2,384.1 550.0,390.8C550.8,397.5 551.5,403.7 551.1,411.5C550.8,419.3 549.8,430.6 547.9,437.5C546.0,444.4 543.8,446.9 539.6,453.0C535.5,459.1 529.2,467.7 523.0,473.8C516.8,479.9 510.8,484.5 502.3,489.4C493.8,494.3 477.1,501.0 472.1,503.3C471.7,504.6 471.1,507.6 469.5,511.2C467.9,514.9 466.6,520.3 462.5,525.0C458.4,529.7 452.1,534.7 445.0,539.4C437.9,544.1 428.3,549.6 420.0,553.1C411.7,556.6 403.3,559.0 395.0,560.6C386.7,562.2 378.3,562.9 370.0,562.8C361.7,562.6 353.3,561.9 345.0,560.0C336.7,558.1 327.3,554.8 320.0,551.2C312.7,547.7 306.4,542.8 301.2,538.8C296.1,534.7 291.4,528.7 289.4,526.7C284.8,526.4 270.5,526.0 261.9,524.7C253.3,523.4 244.4,521.1 237.7,518.7C231.0,516.4 226.9,514.0 221.5,510.6C216.1,507.2 210.8,503.5 205.4,498.5C200.0,493.5 193.2,485.9 189.2,480.8C185.2,475.6 183.0,472.4 181.2,467.8C179.3,463.2 178.7,458.7 178.2,453.3C177.7,447.9 178.2,441.7 177.9,435.5C177.6,429.3 176.8,421.2 176.6,416.1C176.4,411.1 176.8,408.2 177.0,405.0C177.2,401.8 177.3,399.9 177.8,396.9C178.3,393.9 178.9,389.5 179.9,387.2C180.9,384.9 183.3,383.6 184.0,382.9C183.0,380.4 179.8,372.9 177.8,367.8C175.9,362.8 173.8,357.4 172.3,352.6C170.8,347.8 169.4,342.4 168.8,338.8C168.2,335.1 168.3,333.5 168.6,330.4C168.9,327.3 169.4,324.4 170.5,320.0C171.6,315.6 173.0,309.7 175.0,304.0C177.0,298.3 179.5,291.8 182.5,286.0C185.5,280.2 189.2,274.5 193.0,269.5C196.8,264.5 200.5,260.1 205.0,256.0C209.5,251.9 215.0,247.9 220.0,244.8C225.0,241.6 230.0,239.3 235.0,237.2C240.0,235.2 245.1,233.7 250.0,232.3C254.9,230.9 262.1,229.6 264.5,229.1C265.6,227.6 268.4,223.0 271.0,220.0C273.6,217.0 276.8,213.6 280.0,211.0C283.2,208.4 287.1,206.3 290.5,204.2C293.9,202.2 299.0,199.5 300.7,198.5Z" fill="none" stroke="#0a0a0a" stroke-width="1.650" stroke-linejoin="round"/>
<rect x="320.6" y="181.8" width="73.3" height="14.500" fill="none" stroke="#0a0a0a" stroke-width="1.650"/>
<rect x="164" y="167" width="10" height="10" fill="#00ff00" stroke="#8c8c8c" stroke-width=".6"/>
<rect x="157.5" y="179.3" width="10" height="10" fill="#ff0000" stroke="#8c8c8c" stroke-width=".6"/>
</svg><div class="abs" style="left:0;top:817.500px;width:178px;height:41px;background:#fff;border-radius:0 10px 10px 0"></div>
<div class="abs" style="left:10px;top:828.500px;width:19.300px;height:19.500px;background:#000"></div>
<div class="abs" style="left:43.300px;top:828.500px;width:19.400px;height:19.500px;background:#ff0000"></div>
<div class="abs" style="left:76.600px;top:828.500px;width:19.400px;height:19.500px;background:#ffa90f"></div>
<div class="abs" style="left:110px;top:828.500px;width:19.300px;height:19.500px;background:#4780f0"></div>
<div class="abs" style="left:143.300px;top:828.500px;width:19.400px;height:19.500px;background:linear-gradient(180deg,#2ab5e8 0%,#6f9be6 30%,#bd72e8 54%,#ee5670 70%,#f5525a 100%)"></div>
<div class="abs" style="left:186px;top:817.500px;width:170px;height:41px;background:#fff;border-radius:9px"></div>
<svg class="abs" style="left:186px;top:817px" width="170" height="42" viewBox="186 817 170 42">
<g fill="none" stroke="#0b7dca">
<rect x="200" y="832" width="13.800" height="10.900" stroke-width="2.200"/>
<g stroke-width="1.400" stroke-linecap="round" stroke="#1687d2">
<path d="M197,832.700 V830.500 Q197,829.300 198.200,829.300 H200.500 M213,829.300 H215.300 Q216.500,829.300 216.500,830.500 V832.700 M216.500,842.700 V845 Q216.500,846.200 215.300,846.200 H213 M200.500,846.200 H198.200 Q197,846.200 197,845 V842.700"/>
<path d="M240.600,832.700 V830.500 Q240.600,829.300 241.800,829.300 H244.100 M256.300,829.300 H258.600 Q259.800,829.300 259.800,830.500 V832.700 M259.800,842.700 V845 Q259.800,846.200 258.600,846.200 H256.300 M244.100,846.200 H241.800 Q240.600,846.200 240.600,845 V842.700"/>
</g>
</g>
<g fill="#0b7dca">
<rect x="242.800" y="832.100" width="8.100" height="4.600"/><path d="M254.800,832.900 L258,839.700 H251.700Z"/><ellipse cx="247.700" cy="842.100" rx="3.700" ry="2.200"/>
<g transform="translate(294.800,836.900) rotate(45)" stroke="#0b7dca" stroke-width=".7" stroke-linejoin="round"><path d="M-8.200,7.600 V-0.600 A8.200,8.200 0 0 1 8.200,-0.600 V7.600 H3 V-0.600 A3,3 0 0 0 -3,-0.600 V7.600Z"/></g>
<path stroke="#0b7dca" stroke-width=".8" stroke-linejoin="round" d="M287.600,840.700 L290.300,841.800 L288.200,844.600 L290.600,845.200 L287,849.200 L287.900,846.300 L285.800,845.600Z"/>
<path d="M329.600,828.900 H343.900 Q345.600,828.900 345.600,830.600 V844.600 Q345.600,846.300 343.900,846.300 H329.600 Q327.900,846.300 327.900,844.600 V830.600 Q327.900,828.900 329.600,828.900Z M330.200,830.900 V833.900 H333.300 V830.900Z M335.500,830.900 V833.900 H338.700 V830.900Z M340.800,830.900 V833.900 H343.800 V830.900Z M330.200,836.200 V839.200 H333.300 V836.200Z M335.500,836.200 V839.200 H338.700 V836.200Z M340.800,836.200 V839.200 H343.800 V836.200Z M330.200,841.500 V844.400 H333.300 V841.500Z M335.500,841.500 V844.400 H338.700 V841.500Z M340.800,841.500 V844.400 H343.800 V841.500Z" fill-rule="evenodd"/>
</g></svg>
<style>
.rp{position:absolute;left:1368px;width:240px;background:#fff;border:1px solid #e9e9e9;border-radius:9px}
.dd{position:absolute;top:82px;height:22.200px;border:1px solid #8a8a8a;border-radius:3.500px;background:#fff;font-size:12.300px;line-height:20px;padding-left:3.200px;font-weight:500;color:#000;-webkit-text-stroke:.2px #000;white-space:nowrap}
.dd i{position:absolute;top:9.200px;width:0;height:0;border:3.300px solid transparent;border-top:3.800px solid #000;border-bottom:0}
.sl{position:absolute;width:72px;text-align:center;font-size:8.800px;line-height:11px;font-weight:700;color:#111;white-space:nowrap}
.sl b{font-weight:400;font-size:10px;-webkit-text-stroke:.3px #111}
.th{position:absolute;top:463.500px;font-size:11.800px;line-height:15px;color:#fff;font-weight:500;white-space:nowrap}
.td{position:absolute;font-size:13.400px;line-height:15px;white-space:nowrap}
</style>
<div class="rp" style="top:34.400px;height:403.400px"></div>
<svg class="abs" style="left:1420px;top:40px" width="30" height="24" viewBox="0 0 30 24"><g fill="none" stroke="#0b7dca" stroke-linejoin="round"><rect x="5.200" y="5.100" width="17.600" height="13.800" rx="1" stroke-width="2.700"/><path d="M7.600,15.800 L12,11.300 L14.600,13.800 L19.900,8.300" stroke-width="2.100" stroke-linecap="round"/></g><circle cx="9.400" cy="9" r="1.200" fill="#0b7dca"/></svg>
<div class="abs" style="left:1417.300px;top:64px;width:33.700px;height:2.600px;background:#0b7dca"></div>
<svg class="abs" style="left:1513px;top:40px" width="28" height="24" viewBox="0 0 28 24"><g fill="none" stroke="#8c8c8c" stroke-width="2.100" stroke-linejoin="round"><path d="M4,8.800 Q4,6.800 6,6.800 H9 L10.300,4.200 H17.300 L18.600,6.800 H21.600 Q23.600,6.800 23.600,8.800 V18.600 Q23.600,20.600 21.600,20.600 H6 Q4,20.600 4,18.600Z"/><circle cx="13.800" cy="13.400" r="1.900" stroke-width="1.700"/></g></svg>
<div class="dd" style="left:1372.200px;width:85px">1.基础图案<i style="left:71.500px"></i></div>
<div class="dd" style="left:1461.500px;width:92.200px">1.基本图形<i style="left:79.200px"></i></div>
<svg class="abs" style="left:1566px;top:85.600px" width="18" height="16" viewBox="0 0 18 16"><g fill="none" stroke="#8c8c8c" stroke-width="2.300" stroke-linecap="round"><circle cx="8.200" cy="7.500" r="4.900"/><path d="M11.900,11.200 L15.200,14"/></g></svg>
<div class="abs" style="left:1590.300px;top:109.300px;width:3.200px;height:146.600px;background:#d2d2d2"></div>
<svg class="abs" style="left:0;top:0" width="1600" height="867" viewBox="0 0 1600 867"><g fill="none" stroke="#5e625e" stroke-width="1.050" stroke-linejoin="miter"><path d="M1381,125.5 H1408 V112.2 L1435.1,138.8 L1408,165.7 V152.9 H1381Z"/><path d="M1451.6,125.5 H1491.8 L1506.1,139.2 L1491.8,152.9 H1451.6Z"/><path d="M1522.7,122.5 H1562.5 L1576.7,139.2 L1562.5,155.5 H1522.7 L1537,139.2Z"/><circle cx="1408" cy="218.3" r="27.3"/><circle cx="1408" cy="218.3" r="16.6"/><path d="M1465.9,191.2 H1492.7 V204.9 H1506.7 V231.8 H1492.7 V245.7 H1465.9 V231.8 H1451.6 V204.9 H1465.9Z"/><path d="M1549.8,191.2L1560.3,202.0L1555.2,202.0L1555.2,213.0L1566.2,213.0L1566.2,207.9L1577.0,218.4L1566.2,228.9L1566.2,223.8L1555.2,223.8L1555.2,234.8L1560.3,234.8L1549.8,245.6L1539.3,234.8L1544.4,234.8L1544.4,223.8L1533.4,223.8L1533.4,228.9L1522.6,218.4L1533.4,207.9L1533.4,213.0L1544.4,213.0L1544.4,202.0L1539.3,202.0Z"/><path d="M1380.8,297.6 L1391.6,286.8 V292.1 H1424.8 V286.8 L1435.8,297.6 L1424.8,308.3 V303 H1391.6 V308.3Z"/><path d="M1479.0,272.0L1485.4,291.5L1505.9,291.6L1489.4,303.7L1495.6,323.2L1479.0,311.2L1462.4,323.2L1468.6,303.7L1452.1,291.6L1472.6,291.5Z"/><path d="M1550,322.7 C1541,314.5 1522,300.5 1522,286.5 C1522,278.2 1528.4,272.3 1536,272.3 C1542,272.3 1547,274.8 1550,278.8 C1553,274.8 1558,272.3 1564,272.3 C1571.600,272.3 1578,278.2 1578,286.5 C1578,300.5 1559,314.5 1550,322.7Z"/><path d="M1409.6,378.1L1409.7,378.4L1409.8,378.8L1409.8,379.1L1409.8,379.5L1409.7,379.9L1409.6,380.3L1409.4,380.6L1409.2,381.0L1409.0,381.3L1408.7,381.7L1408.3,382.0L1407.9,382.2L1407.5,382.4L1407.1,382.6L1406.6,382.7L1406.1,382.8L1405.6,382.9L1405.1,382.8L1404.5,382.7L1404.0,382.6L1403.5,382.4L1403.0,382.1L1402.5,381.8L1402.1,381.4L1401.7,381.0L1401.3,380.5L1401.0,379.9L1400.7,379.4L1400.5,378.7L1400.4,378.1L1400.3,377.4L1400.3,376.8L1400.4,376.1L1400.5,375.4L1400.7,374.7L1401.0,374.1L1401.4,373.4L1401.9,372.8L1402.4,372.3L1402.9,371.8L1403.6,371.3L1404.3,371.0L1405.0,370.6L1405.8,370.4L1406.6,370.3L1407.4,370.2L1408.3,370.2L1409.1,370.3L1410.0,370.6L1410.8,370.9L1411.6,371.2L1412.3,371.7L1413.1,372.3L1413.7,372.9L1414.3,373.7L1414.8,374.4L1415.3,375.3L1415.6,376.2L1415.9,377.1L1416.0,378.1L1416.1,379.1L1416.0,380.1L1415.9,381.1L1415.6,382.1L1415.2,383.1L1414.7,384.0L1414.2,384.9L1413.5,385.7L1412.7,386.5L1411.8,387.2L1410.9,387.8L1409.9,388.3L1408.8,388.7L1407.7,389.0L1406.6,389.1L1405.4,389.2L1404.3,389.1L1403.1,388.9L1401.9,388.6L1400.8,388.1L1399.7,387.5L1398.7,386.8L1397.8,386.0L1396.9,385.1L1396.1,384.1L1395.5,383.1L1394.9,381.9L1394.5,380.7L1394.2,379.4L1394.0,378.1L1394.0,376.8L1394.1,375.4L1394.3,374.1L1394.7,372.8L1395.2,371.5L1395.9,370.3L1396.7,369.2L1397.6,368.1L1398.6,367.1L1399.8,366.3L1401.0,365.5L1402.3,364.9L1403.7,364.4L1405.1,364.1L1406.6,363.9L1408.1,363.9L1409.6,364.0L1411.1,364.3L1412.6,364.7L1414.0,365.3L1415.3,366.1L1416.6,367.0L1417.8,368.0L1418.9,369.2L1419.8,370.5L1420.6,371.8L1421.3,373.3L1421.8,374.9L1422.2,376.5L1422.4,378.1L1422.4,379.8L1422.3,381.4L1421.9,383.1L1421.4,384.7L1420.7,386.3L1419.9,387.8L1418.9,389.2L1417.7,390.5L1416.4,391.7L1415.0,392.7L1413.5,393.6L1411.9,394.3L1410.2,394.9L1408.4,395.3L1406.6,395.5L1404.8,395.5L1402.9,395.3L1401.1,394.9L1399.4,394.4L1397.6,393.6L1396.0,392.7L1394.5,391.6L1393.0,390.3L1391.8,388.9L1390.6,387.3L1389.6,385.7L1388.8,383.9L1388.2,382.0L1387.8,380.1L1387.6,378.1L1387.6,376.1L1387.8,374.1L1388.2,372.1L1388.9,370.2L1389.7,368.3L1390.7,366.6L1391.9,364.9L1393.3,363.4L1394.9,362.0L1396.6,360.7L1398.4,359.7L1400.3,358.8L1402.4,358.2L1404.5,357.7L1406.6,357.5L1408.8,357.5L1410.9,357.8L1413.1,358.2L1415.1,358.9L1417.2,359.8L1419.1,360.9L1420.9,362.3L1422.5,363.8L1424.0,365.4L1425.3,367.3L1426.5,369.3L1427.4,371.3L1428.1,373.5L1428.5,375.8L1428.8,378.1L1428.8,380.4L1428.5,382.8L1428.0,385.1L1427.2,387.3L1426.3,389.5L1425.1,391.5L1423.6,393.4L1422.0,395.2L1420.2,396.8L1418.2,398.2L1416.1,399.4L1413.8,400.4L1411.5,401.1L1409.1,401.6L1406.6,401.9L1404.1,401.8L1401.6,401.6L1399.2,401.0L1396.8,400.2L1394.4,399.1L1392.3,397.8L1390.2,396.3L1388.3,394.6L1386.6,392.6L1385.1,390.5L1383.8,388.2L1382.8,385.8L1382.0,383.3L1381.5,380.7L1381.2,378.1L1381.3,375.4L1381.6,372.8L1382.2,370.2L1383.0,367.6L1384.2,365.2L1385.6,362.8L1387.2,360.6L1389.1,358.6L1391.1,356.8L1393.4,355.2L1395.8,353.9L1398.4,352.8L1401.0,351.9L1403.8,351.4L1406.6,351.1L1409.4,351.2L1412.2,351.5L1415.0,352.2L1417.7,353.1L1420.3,354.3L1422.8,355.8L1425.1,357.5L1427.3,359.5L1429.2,361.7L1430.9,364.1L1432.3,366.7L1433.4,369.4L1434.3,372.2L1434.9,375.1L1435.1,378.1" stroke-linejoin="round"/><path d="M1479.0,349.7L1485.8,365.1L1502.6,363.3L1492.6,376.9L1502.6,390.5L1485.8,388.7L1479.0,404.1L1472.2,388.7L1455.4,390.5L1465.4,376.9L1455.4,363.3L1472.2,365.1Z"/><path d="M1540.6,352.2 H1577.600 L1559.9,401 H1522.5Z"/><path d="M1391.500,434 A27.300,27.300 0 0 1 1424.500,434"/><path d="M1538,434 L1550,429.300 L1562,434"/></g></svg>
<div class="sl" style="left:1372px;top:175.400px">箭头</div><div class="sl" style="left:1443px;top:175.400px">箭头<b>1</b></div><div class="sl" style="left:1513.800px;top:175.400px">箭头<b>2</b></div>
<div class="sl" style="left:1372px;top:254.400px">同心圆</div><div class="sl" style="left:1443px;top:254.400px">十字</div><div class="sl" style="left:1513.800px;top:254.400px">十字箭头</div>
<div class="sl" style="left:1372.200px;top:333.700px">双箭头</div><div class="sl" style="left:1443px;top:333.700px">五角星</div><div class="sl" style="left:1514px;top:333.700px">心形</div>
<div class="sl" style="left:1372.200px;top:412.800px">螺旋线</div><div class="sl" style="left:1443px;top:412.800px">六角星</div><div class="sl" style="left:1514px;top:412.800px">平行四边形</div>
<!-- process panel -->
<div class="rp" style="top:447.200px;height:411.200px"></div>
<div class="abs" style="left:1376.200px;top:454.200px;width:218.800px;height:32.600px;background:#027fca;border-radius:4px 4px 0 0"></div>
<div class="th" style="left:1379px">加工工艺</div><div class="th" style="left:1453px">速度</div><div class="th" style="left:1511.200px">功率</div><div class="th" style="left:1560px">输出</div>
<div class="abs" style="left:1376.200px;top:486.800px;width:218.800px;height:32.200px;background:#ebebeb"></div>
<div class="abs" style="left:1378.300px;top:496px;width:14px;height:14px;background:#000"></div>
<div class="abs" style="left:1378.300px;top:528.600px;width:14px;height:14px;background:#e5453d"></div>
<div class="td" style="left:1397.600px;top:495.700px;font-size:12px;font-weight:500">切割</div>
<div class="td" style="left:1397.600px;top:528.200px;font-size:12px;font-weight:500">描线</div>
<div class="td" style="left:1444.800px;top:496.200px;width:40px;text-align:center;color:#6e6e6e">40.0</div>
<div class="td" style="left:1503.300px;top:496.200px;width:40px;text-align:center;color:#6e6e6e">99.0</div>
<div class="td" style="left:1445.600px;top:528.700px;width:40px;text-align:center;color:#000;-webkit-text-stroke:.4px #000">100.0</div>
<div class="td" style="left:1503.300px;top:528.700px;width:40px;text-align:center;color:#000;-webkit-text-stroke:.4px #000">15.0</div>
<svg class="abs" style="left:1561px;top:495px" width="22" height="16" viewBox="0 0 22 16"><g fill="none" stroke="#111" stroke-width="1.300" stroke-linejoin="round"><path d="M2.200,8.100 C5.500,4.100 8.400,2.400 11,2.400 C13.600,2.400 16.500,4.100 19.800,8.100 C16.500,12.100 13.600,13.800 11,13.800 C8.400,13.800 5.500,12.100 2.200,8.100Z"/><circle cx="11" cy="8.050" r="3.550"/></g></svg>
<svg class="abs" style="left:1561px;top:527.500px" width="22" height="16" viewBox="0 0 22 16"><g fill="none" stroke="#111" stroke-width="1.300" stroke-linejoin="round"><path d="M2.200,8.100 C5.500,4.100 8.400,2.400 11,2.400 C13.600,2.400 16.500,4.100 19.800,8.100 C16.500,12.100 13.600,13.800 11,13.800 C8.400,13.800 5.500,12.100 2.200,8.100Z"/><circle cx="11" cy="8.050" r="3.550"/></g></svg>
<!-- start button -->
<div class="abs" style="left:1427.300px;top:708px;width:106.200px;height:106.200px;border-radius:50%;border:3.900px solid #027fca;background:#fff"></div>
<div class="abs" style="left:1435.200px;top:715.900px;width:90.400px;height:90.400px;border-radius:50%;background:#027fca"></div>
<div class="abs" style="left:1429.600px;top:745.800px;width:100px;text-align:center;font-size:24px;line-height:32px;color:#fff;font-weight:500;white-space:nowrap">开始</div>
<!-- status -->
<div class="abs" style="left:1376.300px;top:827.200px;width:216px;height:24.400px;background:#d9d9d9"></div>
<div class="abs" style="left:1376.300px;top:827.200px;width:160px;height:24.400px;background:#fff;border:2px solid #cdcdcd"></div>
<svg class="abs" style="left:1429.500px;top:831.500px" width="15" height="15" viewBox="0 0 15 15"><g fill="none" stroke="#f08a33" stroke-width="1.200"><circle cx="7.300" cy="7.400" r="5.900"/><path d="M4.900,5 L9.700,9.800 M9.700,5 L4.900,9.800"/></g></svg>
<div class="abs" style="left:1448.600px;top:831.300px;font-size:12px;line-height:16px;color:#f08a33;white-space:nowrap;letter-spacing:.1px">未连接</div>
<div class="abs" style="left:1536.300px;top:831.800px;width:56px;text-align:center;font-size:12px;line-height:16px;color:#000;font-weight:500;white-space:nowrap">切换</div>

</body></html>
